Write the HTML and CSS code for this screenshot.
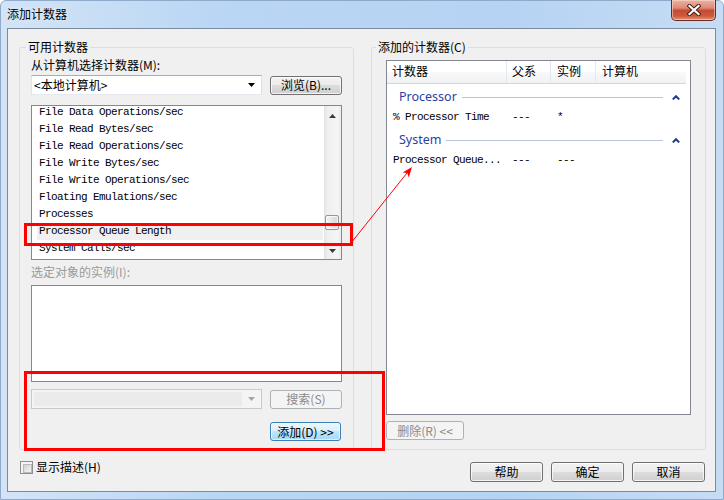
FILE: index.html
```html
<!DOCTYPE html>
<html lang="zh-CN">
<head>
<meta charset="utf-8">
<title>添加计数器</title>
<link rel="stylesheet" href="styles.css">
</head>
<body>
<div class="window">
  <div class="titlebar">
    <span class="title">添加计数器</span>
    <button class="close" type="button" aria-label="关闭">
      <svg width="14" height="12" viewBox="0 0 14 12">
        <path d="M2.5 2 L11.5 10 M11.5 2 L2.5 10" stroke="#4a1c14" stroke-width="4.2" stroke-linecap="square" fill="none"/>
        <path d="M2.5 2 L11.5 10 M11.5 2 L2.5 10" stroke="#ffffff" stroke-width="2.2" stroke-linecap="square" fill="none"/>
      </svg>
    </button>
  </div>

  <div class="client">
    <div class="groups">
      <fieldset class="group group-left">
        <legend>可用计数器</legend>
        <div class="group-body">
          <div class="label">从计算机选择计数器(M):</div>
          <div class="row row-machine">
            <div class="combo">
              <span class="combo-text">&lt;本地计算机&gt;</span>
              <svg class="combo-arrow" width="7" height="4" viewBox="0 0 7 4"><path d="M0 0 H7 L3.5 4 Z" fill="#000"/></svg>
            </div>
            <button class="btn" type="button">浏览(B)...</button>
          </div>

          <div class="listbox counters">
            <ul class="items">
              <li>File Data Operations/sec</li>
              <li>File Read Bytes/sec</li>
              <li>File Read Operations/sec</li>
              <li>File Write Bytes/sec</li>
              <li>File Write Operations/sec</li>
              <li>Floating Emulations/sec</li>
              <li>Processes</li>
              <li class="selected">Processor Queue Length</li>
              <li>System Calls/sec</li>
            </ul>
            <div class="vscroll">
              <div class="sb-btn">
                <svg width="7" height="4" viewBox="0 0 7 4"><path d="M0 4 H7 L3.5 0 Z" fill="#3d3d3d"/></svg>
              </div>
              <div class="sb-track"><div class="sb-thumb"></div></div>
              <div class="sb-btn">
                <svg width="7" height="4" viewBox="0 0 7 4"><path d="M0 0 H7 L3.5 4 Z" fill="#3d3d3d"/></svg>
              </div>
            </div>
          </div>

          <div class="label label-disabled">选定对象的实例(I):</div>
          <div class="listbox instances"></div>

          <div class="row row-search">
            <div class="combo combo-disabled">
              <span class="combo-fill"></span>
              <svg class="combo-arrow" width="7" height="4" viewBox="0 0 7 4"><path d="M0 0 H7 L3.5 4 Z" fill="#a6a6a6"/></svg>
            </div>
            <button class="btn btn-disabled" type="button">搜索(S)</button>
          </div>

          <div class="row row-add">
            <button class="btn btn-default btn-add" type="button">添加(D) &gt;&gt;</button>
          </div>
        </div>
      </fieldset>

      <fieldset class="group group-right">
        <legend>添加的计数器(C)</legend>
        <div class="group-body">
          <div class="listview">
            <div class="lv-head">
              <div class="col c1">计数器</div>
              <div class="col c2">父系</div>
              <div class="col c3">实例</div>
              <div class="col c4">计算机</div>
            </div>
            <div class="lv-group">
              <span class="gname">Processor</span>
              <span class="gline"></span>
              <svg class="gcaret" width="8" height="5" viewBox="0 0 8 5"><path d="M0.8 4.4 L4 1.2 L7.2 4.4" stroke="#1d3a8c" stroke-width="2" fill="none"/></svg>
            </div>
            <div class="lv-row">
              <span class="cell c1">% Processor Time</span>
              <span class="cell c2">---</span>
              <span class="cell c3">*</span>
            </div>
            <div class="lv-group">
              <span class="gname">System</span>
              <span class="gline"></span>
              <svg class="gcaret" width="8" height="5" viewBox="0 0 8 5"><path d="M0.8 4.4 L4 1.2 L7.2 4.4" stroke="#1d3a8c" stroke-width="2" fill="none"/></svg>
            </div>
            <div class="lv-row">
              <span class="cell c1">Processor Queue...</span>
              <span class="cell c2">---</span>
              <span class="cell c3">---</span>
            </div>
          </div>
          <button class="btn btn-disabled btn-remove" type="button">删除(R) &lt;&lt;</button>
        </div>
      </fieldset>
    </div>

    <div class="footer">
      <label class="check"><span class="check-box"></span><span>显示描述(H)</span></label>
      <div class="actions">
        <button class="btn btn-action" type="button">帮助</button>
        <button class="btn btn-action" type="button">确定</button>
        <button class="btn btn-action" type="button">取消</button>
      </div>
    </div>
  </div>

  <!-- red callouts drawn over the dialog -->
  <div class="callout callout-counter"></div>
  <div class="callout callout-add"></div>
  <svg class="callout-arrow" width="724" height="500" viewBox="0 0 724 500">
    <line x1="351" y1="243" x2="407" y2="173" stroke="#ff0000" stroke-width="1"/>
    <path d="M412 167 L408.8 177.6 L407.3 172.9 L402.6 172.6 Z" fill="#ff0000"/>
  </svg>
</div>
</body>
</html>
```

FILE: styles.css
```css
* {
  box-sizing: border-box;
}

html,
body {
  margin: 0;
  padding: 0;
}

body {
  width: 724px;
  height: 500px;
  overflow: hidden;
  background: #ffffff;
  font-family: "Noto Sans CJK SC", "Noto Sans", sans-serif;
  font-size: 12px;
  color: #000;
}

/* ---------- window frame ---------- */
.window {
  position: relative;
  width: 724px;
  height: 500px;
  display: flex;
  flex-direction: column;
  padding: 0 7px 7px 6px;
  border: 1px solid #8eabcc;
  border-radius: 6px 6px 0 0;
  background: linear-gradient(to right, #d3e4f6 0%, #bad6f4 30%, #b6d3f3 70%, #c6dcf3 100%);
}

.titlebar {
  height: 27px;
  display: flex;
  align-items: flex-start;
  flex: none;
}

.title {
  margin-top: 6px;
  line-height: 14px;
  font-size: 12px;
  color: #000;
  text-shadow: 0 0 4px #e9f3fd;
}

.close {
  margin: -1px 0 0 auto;
  width: 45px;
  height: 21px;
  padding: 0;
  border: 1px solid #6b2a20;
  border-top: none;
  border-radius: 0 0 5px 5px;
  background: linear-gradient(#eab3a5 0%, #dd8a76 40%, #c74a33 52%, #cc5a3e 80%, #e39473 100%);
  box-shadow: inset 0 0 0 1px rgba(255, 220, 210, 0.55);
  display: flex;
  align-items: center;
  justify-content: center;
}

.close svg {
  display: block;
  margin-top: -1px;
}

/* ---------- client area ---------- */
.client {
  flex: 1;
  display: flex;
  flex-direction: column;
  padding: 11px 9px 0 11px;
  border: 1px solid #7c8b9b;
  background: #f0f0f0;
}

.groups {
  display: flex;
  gap: 17px;
}

.group {
  width: 335px;
  height: 410px;
  margin: 0;
  padding: 0 11px;
  min-inline-size: 0;
  border: 1px solid #d5dfe5;
  border-radius: 3px;
}

.group legend {
  padding: 0 2px;
  margin-left: -5px;
  line-height: 14px;
  height: 14px;
}

.group-right {
  padding: 0 14px;
}

.group-right legend {
  margin-left: -10px;
}

.group-body {
  display: flex;
  flex-direction: column;
}

.label {
  margin-top: 4px;
  line-height: 14px;
  height: 14px;
}

.label-disabled {
  margin-top: 5px;
  color: #9a9a9a;
}

.row {
  display: flex;
  align-items: center;
  gap: 8px;
}

.row-machine {
  margin-top: 3px;
  height: 20px;
}

.row-search {
  margin-top: 7px;
  height: 20px;
}

.row-add {
  margin-top: 13px;
  justify-content: flex-end;
  padding-right: 1px;
}

/* ---------- combo boxes ---------- */
.combo {
  width: 231px;
  height: 20px;
  display: flex;
  align-items: center;
  padding: 0 3px 0 2px;
  border: 1px solid;
  border-color: #abadb3 #dbdfe6 #e3e9ef #e2e3ea;
  background: #fff;
}

.combo-text {
  flex: 1;
  line-height: 14px;
}

.combo-arrow {
  display: block;
  margin-left: auto;
  margin-right: 3px;
}

.combo-disabled {
  border-color: #c9c9c9;
  background: #f4f4f4;
  padding: 2px 3px 2px 2px;
}

.combo-fill {
  width: 208px;
  height: 14px;
  background: #ebebeb;
}

/* ---------- buttons ---------- */
.btn {
  height: 19px;
  width: 72px;
  padding: 0;
  font-family: "Noto Sans CJK SC", "Noto Sans", sans-serif;
  font-size: 12px;
  line-height: 14px;
  color: #000;
  border: 1px solid #707070;
  border-radius: 3px;
  background: linear-gradient(#f2f2f2 0%, #ebebeb 50%, #dddddd 50%, #cfcfcf 100%);
  box-shadow: inset 0 0 0 1px rgba(255, 255, 255, 0.75);
  white-space: nowrap;
}

.btn-disabled {
  color: #8a8a8a;
  border-color: #adb2b5;
  background: #f4f4f4;
  box-shadow: none;
}

.btn-default {
  border-color: #3c7fb1;
  background: linear-gradient(#eaf6fd 0%, #d9f0fc 50%, #bee6fd 50%, #a7d9f5 100%);
  box-shadow: inset 0 0 0 1px rgba(255, 255, 255, 0.6);
}

.btn-add {
  width: 71px;
}

.btn-remove {
  width: 78px;
  margin-top: 6px;
}

.btn-action {
  width: 73px;
  height: 20px;
}

/* ---------- list boxes ---------- */
.listbox {
  width: 311px;
  border: 1px solid #828790;
  background: #fff;
}

.counters {
  margin-top: 10px;
  height: 155px;
  display: flex;
  overflow: hidden;
}

.instances {
  margin-top: 6px;
  height: 97px;
}

.items {
  flex: 1;
  list-style: none;
  margin: -2px 1px 0 5px;
  padding: 0;
  font-family: "Liberation Mono", "DejaVu Sans Mono", monospace;
  font-size: 11px;
  letter-spacing: -0.6px;
}

.items li {
  height: 17px;
  line-height: 17px;
  padding-left: 2px;
  white-space: nowrap;
}

.items li.selected {
  background: #f0f0f0;
}

/* vertical scroll bar */
.vscroll {
  width: 17px;
  flex: none;
  display: flex;
  flex-direction: column;
  background: linear-gradient(to right, #e2e2e2 0%, #efefef 20%, #f5f5f5 80%, #ebebeb 100%);
}

.sb-btn {
  height: 17px;
  display: flex;
  align-items: center;
  justify-content: center;
}

.sb-btn svg {
  display: block;
}

.sb-btn:first-child svg {
  margin-top: 2px;
}

.sb-track {
  flex: 1;
}

.sb-thumb {
  margin: 92px 0 0 1px;
  width: 14px;
  height: 15px;
  border: 1px solid #979797;
  border-radius: 2px;
  background: linear-gradient(to right, #f4f4f4 0%, #e6e6e6 50%, #d8d8d8 100%);
  box-shadow: inset 0 0 0 1px rgba(255, 255, 255, 0.7);
}

/* ---------- list view ---------- */
.listview {
  margin-top: 6px;
  width: 305px;
  height: 355px;
  border: 1px solid #828790;
  background: #fff;
}

.lv-head {
  display: flex;
  height: 23px;
  background: linear-gradient(#ffffff 0%, #ffffff 45%, #f7f8f9 55%, #f1f2f4 100%);
  border-bottom: 1px solid #d5d5d5;
  margin-right: 4px;
}

.lv-head .col {
  padding: 3px 0 0 5px;
  line-height: 14px;
  border-right: 1px solid #e3e8ee;
}

.c1 {
  width: 120px;
}

.c2 {
  width: 44px;
}

.c3 {
  width: 45px;
}

.lv-head .c4 {
  flex: 1;
  border-right: none;
  padding-left: 6px;
}

.lv-head .c3 {
  padding-left: 6px;
}

.lv-group {
  display: flex;
  align-items: center;
  height: 22px;
  margin-top: 2px;
  padding: 0 10px 0 12px;
}

.gname {
  font-family: "Noto Sans", "Open Sans", sans-serif;
  font-size: 12.5px;
  color: #2a3fa6;
  line-height: 16px;
}

.gline {
  flex: 1;
  height: 1px;
  margin: 1px 9px 0 5px;
  background: #b9c4df;
}

.gcaret {
  display: block;
}

.lv-row {
  display: flex;
  height: 19px;
  line-height: 19px;
  font-family: "Liberation Mono", "DejaVu Sans Mono", monospace;
  font-size: 11px;
  letter-spacing: -0.6px;
  white-space: nowrap;
}

.lv-row .c1 {
  padding-left: 6px;
}

.lv-row .c2 {
  padding-left: 5px;
}

.lv-row .c3 {
  padding-left: 6px;
}

/* ---------- footer ---------- */
.footer {
  display: flex;
  align-items: flex-start;
  padding: 0 1px 0 1px;
}

.check {
  margin-top: 10px;
  display: flex;
  align-items: center;
  gap: 3px;
  line-height: 14px;
}

.check-box {
  width: 13px;
  height: 13px;
  border: 1px solid #8e8f8f;
  background: #f4f4f4;
  padding: 2px;
  display: block;
  position: relative;
}

.check-box::after {
  content: "";
  display: block;
  width: 100%;
  height: 100%;
  border: 1px solid #b7b9bc;
  background: linear-gradient(135deg, #cfd1d4 0%, #e6e7e8 60%, #f6f6f6 100%);
}

.actions {
  margin: 12px 0 0 auto;
  display: flex;
  gap: 8px;
}

/* ---------- red callouts ---------- */
.callout {
  position: absolute;
  border: 3px solid #ff0000;
  pointer-events: none;
}

.callout-counter {
  left: 23px;
  top: 222px;
  width: 329px;
  height: 23px;
}

.callout-add {
  left: 23px;
  top: 370px;
  width: 361px;
  height: 80px;
}

.callout-arrow {
  position: absolute;
  left: -1px;
  top: -1px;
  pointer-events: none;
}
```
